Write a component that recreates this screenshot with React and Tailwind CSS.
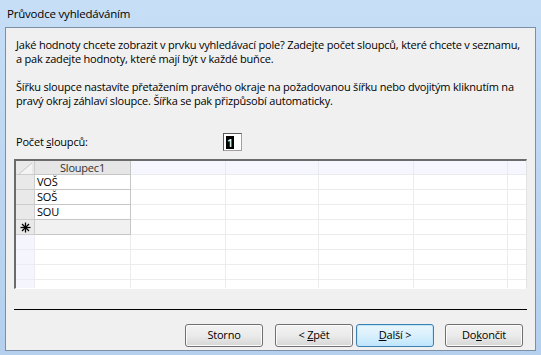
import React from "react";

const COLS = [96, 95, 93, 95, 94, 40];
const ROWS = [["VOŠ"], ["SOŠ"], ["SOU"], ["new"], [], [], [], [], []];

const Asterisk = () => (
  <svg width="11" height="11" viewBox="0 0 11 11" className="block">
    <g stroke="#000" strokeWidth="1.3">
      <line x1="5.5" y1="0.5" x2="5.5" y2="10.5" />
      <line x1="0.5" y1="5.5" x2="10.5" y2="5.5" />
      <line x1="2" y1="2" x2="9" y2="9" />
      <line x1="9" y1="2" x2="2" y2="9" />
    </g>
  </svg>
);

const Corner = () => (
  <svg width="19" height="14" viewBox="0 0 19 14" className="block">
    <polygon points="3,13 16,2 16,13" fill="#f4f4f4" />
    <line x1="3" y1="13" x2="16" y2="2" stroke="#c9c9c9" strokeWidth="1" />
  </svg>
);

const Btn = ({ children, primary = false, className = "" }) => (
  <div
    className={`w-[78px] h-[23px] rounded-[3px] border flex items-center justify-center whitespace-pre text-black ${
      primary
        ? "border-[#3c7fb1] shadow-[inset_0_0_0_1px_#bfe6fb] bg-gradient-to-b from-[#eaf6fd] via-[#d9f0fc] to-[#bee6fd]"
        : "border-[#707070] shadow-[inset_0_0_0_1px_#fbfbfb] bg-gradient-to-b from-[#f2f2f2] via-[#ebebeb] to-[#d6d6d6]"
    } ${className}`}
  >
    {children}
  </div>
);

export default function App() {
  return (
    <div className="w-[541px] h-[355px] overflow-hidden bg-gradient-to-b from-[#c6def6] to-[#b4d0ee] flex flex-col font-['Open_Sans',sans-serif] text-[11px] tracking-[-0.2px] text-black">
      {/* title bar */}
      <div className="h-[27px] pl-[7px] flex items-center text-[11.5px]">Průvodce vyhledáváním</div>

      {/* client area */}
      <div className="ml-[5px] w-[531px] h-[324px] border border-[#7d8fa5] bg-[#f0f0f0] flex flex-col px-[8px]">
        <div className="pt-[10px] pl-[2px] leading-[14px] whitespace-nowrap">
          <p>
            Jaké hodnoty chcete zobrazit v prvku vyhledávací pole? Zadejte počet sloupců, které chcete v seznamu,
            <br />a pak zadejte hodnoty, které mají být v každé buňce.
          </p>
          <p className="mt-[14px]">
            Šířku sloupce nastavíte přetažením pravého okraje na požadovanou šířku nebo dvojitým kliknutím na
            <br />
            pravý okraj záhlaví sloupce. Šířka se pak přizpůsobí automaticky.
          </p>
        </div>

        <div className="mt-[25px] h-[18px] flex items-center pl-[2px]">
          <span className="w-[207px]">
            Počet <span className="underline">s</span>loupců:
          </span>
          <div className="w-[19px] h-[18px] border border-[#a0a0a0] border-t-[#5a5a5a] border-l-[#5a5a5a] bg-white flex items-center pl-[2px]">
            <span className="bg-black text-white text-[11px] leading-[13px] px-[1px] font-semibold">1</span>
          </div>
        </div>

        {/* datasheet */}
        <div className="mt-[8px] h-[130px] border-t-2 border-l-2 border-t-[#6b6b6b] border-l-[#6b6b6b] border-r border-b border-r-[#e3e3e3] border-b-[#ffffff] bg-white overflow-hidden flex flex-col">
          <div className="flex h-[14px] shrink-0">
            <div className="w-[19px] shrink-0 bg-[#e9e9e9] border-r border-b border-[#cdcdcd]">
              <Corner />
            </div>
            {COLS.map((w, i) => (
              <div
                key={i}
                style={{ width: w }}
                className={`shrink-0 border-r border-b leading-[13px] text-center ${
                  i === 0 ? "bg-[#e6e6e6] border-[#c6c6c6] text-[#333]" : "bg-[#f6f7fe] border-[#e9e9ee]"
                }`}
              >
                {i === 0 ? "Sloupec1" : ""}
              </div>
            ))}
          </div>
          {ROWS.map((r, ri) => {
            const active = ri < 4;
            return (
              <div key={ri} className="flex h-[15px] shrink-0">
                <div
                  className={`w-[19px] shrink-0 border-r border-b flex items-center justify-center ${
                    active ? "bg-[#e9e9e9] border-[#cdcdcd]" : "bg-[#f5f6fd] border-[#ececf2]"
                  }`}
                >
                  {r[0] === "new" && <Asterisk />}
                </div>
                {COLS.map((w, i) => (
                  <div
                    key={i}
                    style={{ width: w }}
                    className={`shrink-0 border-r border-b leading-[14px] pl-[2px] ${
                      i === 0 && active ? "border-[#c6c6c6]" : "border-[#ececec]"
                    } ${i === 0 && r[0] === "new" ? "bg-[#f1f1f1]" : "bg-white"}`}
                  >
                    {i === 0 && r[0] && r[0] !== "new" ? r[0] : ""}
                  </div>
                ))}
              </div>
            );
          })}
        </div>

        <div className="mt-[20px] h-px bg-black" />

        <div className="mt-[14px] flex justify-end pr-[4px]">
          <Btn>Storno</Btn>
          <Btn className="ml-[12px]">
            {"< "}
            <span className="underline">Z</span>pět
          </Btn>
          <Btn primary className="ml-[3px]">
            <span className="underline">D</span>
            {"alší >"}
          </Btn>
          <Btn className="ml-[11px]">
            Do<span className="underline">k</span>ončit
          </Btn>
        </div>
      </div>
    </div>
  );
}
